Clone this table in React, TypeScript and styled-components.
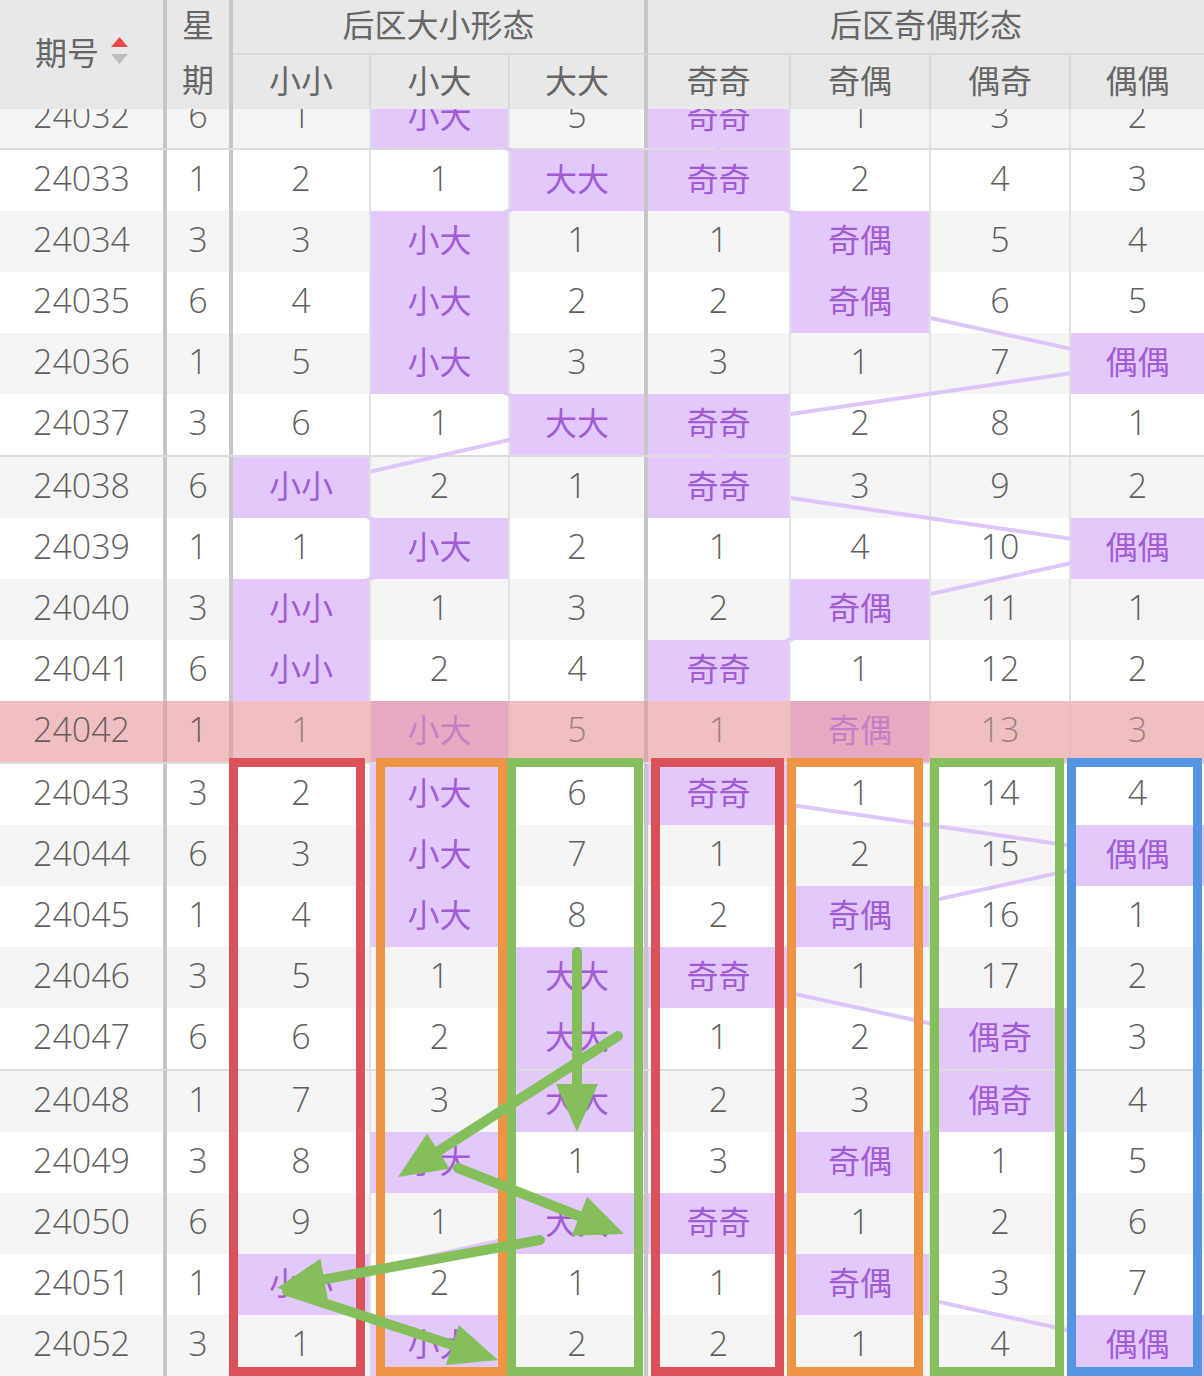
import React from 'react';
import styled, { createGlobalStyle } from 'styled-components';

const GlobalStyle = createGlobalStyle`
  html, body { margin: 0; padding: 0; background: #fff; }
  body { font-family: "Open Sans", "Noto Sans CJK SC", sans-serif; }
`;

type Col = { w: number; b: number };
const COLS: Col[] = [
  { w: 167, b: 4 },
  { w: 66, b: 4 },
  { w: 138, b: 2 },
  { w: 139, b: 2 },
  { w: 138, b: 4 },
  { w: 143, b: 2 },
  { w: 140, b: 2 },
  { w: 140, b: 2 },
  { w: 133, b: 0 },
];
const GRID = COLS.map((c) => `${c.w}px`).join(' ');
const COL_START: number[] = [];
COLS.reduce((acc, c) => {
  COL_START.push(acc);
  return acc + c.w;
}, 0);
const colCenter = (i: number) => COL_START[i] + (COLS[i].w - COLS[i].b) / 2;

const ROW_H = 61;
const rowTop = (i: number) => i * ROW_H + Math.ceil(i / 5) * 2;
const rowCenter = (i: number) => rowTop(i) + ROW_H / 2;

type Cell = string | number;
const DATA: Cell[][] = [
  ['24032', 6, 1, '小大', 5, '奇奇', 1, 3, 2],
  ['24033', 1, 2, 1, '大大', '奇奇', 2, 4, 3],
  ['24034', 3, 3, '小大', 1, 1, '奇偶', 5, 4],
  ['24035', 6, 4, '小大', 2, 2, '奇偶', 6, 5],
  ['24036', 1, 5, '小大', 3, 3, 1, 7, '偶偶'],
  ['24037', 3, 6, 1, '大大', '奇奇', 2, 8, 1],
  ['24038', 6, '小小', 2, 1, '奇奇', 3, 9, 2],
  ['24039', 1, 1, '小大', 2, 1, 4, 10, '偶偶'],
  ['24040', 3, '小小', 1, 3, 2, '奇偶', 11, 1],
  ['24041', 6, '小小', 2, 4, '奇奇', 1, 12, 2],
  ['24042', 1, 1, '小大', 5, 1, '奇偶', 13, 3],
  ['24043', 3, 2, '小大', 6, '奇奇', 1, 14, 4],
  ['24044', 6, 3, '小大', 7, 1, 2, 15, '偶偶'],
  ['24045', 1, 4, '小大', 8, 2, '奇偶', 16, 1],
  ['24046', 3, 5, 1, '大大', '奇奇', 1, 17, 2],
  ['24047', 6, 6, 2, '大大', 1, 2, '偶奇', 3],
  ['24048', 1, 7, 3, '大大', 2, 3, '偶奇', 4],
  ['24049', 3, 8, '小大', 1, 3, '奇偶', 1, 5],
  ['24050', 6, 9, 1, '大大', '奇奇', 1, 2, 6],
  ['24051', 1, '小小', 2, 1, 1, '奇偶', 3, 7],
  ['24052', 3, 1, '小大', 2, 2, 1, 4, '偶偶'],
];
const CURRENT = 10;

const isHl = (ci: number, v: Cell) => ci >= 2 && typeof v === 'string';

const trendLines: { x1: number; y1: number; x2: number; y2: number }[] = [];
[
  [2, 3, 4],
  [5, 6, 7, 8],
].forEach((group) => {
  const pos = DATA.map((r) => group.find((ci) => typeof r[ci] === 'string') as number);
  for (let i = 0; i < pos.length - 1; i++) {
    if (i === CURRENT - 1 || i === CURRENT) continue;
    trendLines.push({
      x1: colCenter(pos[i]),
      y1: rowCenter(i),
      x2: colCenter(pos[i + 1]),
      y2: rowCenter(i + 1),
    });
  }
});
const CONTENT_H = rowTop(DATA.length) + 2;

const Page = styled.div`
  position: relative;
  width: 1204px;
  height: 1376px;
  overflow: hidden;
  background: #fff;
  color: #666;
  font-size: 33px;
`;

const Header = styled.div`
  display: grid;
  grid-template-columns: ${GRID};
  grid-template-rows: 55px 54px;
  background: #e8e8e8;
  position: relative;
  z-index: 5;
  font-family: "Noto Sans CJK SC", sans-serif;
  font-size: 32px;
`;

const HeadCell = styled.div<{ $b: number; $span?: number; $rows?: number; $bottom?: boolean }>`
  box-sizing: border-box;
  display: flex;
  align-items: center;
  justify-content: center;
  line-height: 1;
  padding-bottom: ${(p) => (p.$bottom ? 7 : 6)}px;
  color: #666;
  grid-column: span ${(p) => p.$span || 1};
  grid-row: span ${(p) => p.$rows || 1};
  border-right: ${(p) => (p.$b === 4 ? '4px solid #c6c6c6' : p.$b === 2 ? '2px solid #d8d8d8' : 'none')};
  border-bottom: ${(p) => (p.$bottom ? '2px solid #d8d8d8' : 'none')};
  white-space: nowrap;
`;

const IssueHead = styled(HeadCell)`
  gap: 12px;
  padding-bottom: 8px;
`;

const WeekHead = styled(HeadCell)`
  flex-direction: column;
  justify-content: flex-start;
  padding-bottom: 0;
`;

const WeekChar = styled.span<{ $h: number }>`
  height: ${(p) => p.$h}px;
  display: flex;
  align-items: center;
  padding-bottom: 6px;
  box-sizing: border-box;
`;

const Body = styled.div`
  height: 1267px;
  overflow: hidden;
  position: relative;
`;

const BodyInner = styled.div`
  position: relative;
  margin-top: -22px;
`;

const Row = styled.div<{ $alt: boolean; $divider: boolean; $current: boolean }>`
  display: grid;
  grid-template-columns: ${GRID};
  height: ${ROW_H}px;
  background: ${(p) => (p.$current ? '#f0bfc1' : p.$alt ? '#f5f5f5' : '#ffffff')};
  border-bottom: ${(p) => (p.$divider ? '2px solid #dcdcdc' : 'none')};
`;

const DataCell = styled.div<{ $b: number; $hl: boolean; $cur: boolean; $data: boolean }>`
  box-sizing: border-box;
  display: flex;
  align-items: center;
  justify-content: center;
  line-height: 1;
  padding-bottom: ${(p) => (p.$hl ? 8 : 6)}px;
  font-family: ${(p) => (p.$hl ? '"Noto Sans CJK SC", sans-serif' : '"Open Sans", "Noto Sans CJK SC", sans-serif')};
  font-size: ${(p) => (p.$hl ? 32 : 34)}px;
  font-weight: ${(p) => (p.$hl ? 400 : 300)};
  border-right: ${(p) =>
    p.$b === 4
      ? `4px solid ${p.$cur ? '#d8aaac' : '#c6c6c6'}`
      : p.$b === 2
        ? `2px solid ${p.$cur ? '#ebbcbe' : '#e2e2e2'}`
        : 'none'};
  background: ${(p) => (p.$hl ? (p.$cur ? '#e7a8c2' : '#e3c8fc') : 'transparent')};
  background-clip: padding-box;
  color: ${(p) =>
    p.$hl ? (p.$cur ? '#c37fc4' : '#a15cd4') : p.$cur ? (p.$data ? '#9e8080' : '#6b5d5d') : '#5f5f5f'};
  position: ${(p) => (p.$hl ? 'relative' : 'static')};
  z-index: ${(p) => (p.$hl ? 2 : 'auto')};
  white-space: nowrap;
`;

const TrendSvg = styled.svg`
  position: absolute;
  left: 0;
  top: 0;
  z-index: 1;
  pointer-events: none;
`;

const Box = styled.div<{ $color: string }>`
  position: absolute;
  top: 758px;
  height: 618px;
  box-sizing: border-box;
  border: 9px solid ${(p) => p.$color};
  z-index: 10;
  pointer-events: none;
`;

const ArrowSvg = styled.svg`
  position: absolute;
  left: 0;
  top: 0;
  z-index: 11;
  pointer-events: none;
`;

const BOXES = [
  { left: 229, width: 136, color: '#d9525a' },
  { left: 376, width: 131, color: '#ee9445' },
  { left: 507, width: 136, color: '#86c05e' },
  { left: 651, width: 133, color: '#d9525a' },
  { left: 787, width: 136, color: '#ee9445' },
  { left: 930, width: 134, color: '#86c05e' },
  { left: 1067, width: 135, color: '#5495e3' },
];

const ARROWS: [number, number, number, number][] = [
  [577, 952, 577, 1132],
  [618, 1036, 398, 1177],
  [458, 1168, 624, 1234],
  [540, 1240, 277, 1288],
  [287, 1291, 498, 1360],
];

function arrowGeom(x1: number, y1: number, x2: number, y2: number, len = 48, half = 21) {
  const dx = x2 - x1;
  const dy = y2 - y1;
  const L = Math.hypot(dx, dy);
  const ux = dx / L;
  const uy = dy / L;
  const bx = x2 - ux * len;
  const by = y2 - uy * len;
  const px = -uy;
  const py = ux;
  return {
    line: { x1, y1, x2: bx + ux * 4, y2: by + uy * 4 },
    head: `${x2},${y2} ${bx + px * half},${by + py * half} ${bx - px * half},${by - py * half}`,
  };
}

const SortIcon = () => (
  <svg width="17" height="28" viewBox="0 0 17 28">
    <polygon points="8.5,0 17,10 0,10" fill="#e94a4a" />
    <polygon points="0,17 17,17 8.5,27" fill="#bdbdbd" />
  </svg>
);

const SIZE_HEAD = ['小小', '小大', '大大'];
const PARITY_HEAD = ['奇奇', '奇偶', '偶奇', '偶偶'];

export default function App() {
  return (
    <Page>
      <GlobalStyle />
      <Header>
        <IssueHead $b={4} $rows={2}>
          <span>期号</span>
          <SortIcon />
        </IssueHead>
        <WeekHead $b={4} $rows={2}>
          <WeekChar $h={53}>星</WeekChar>
          <WeekChar $h={58}>期</WeekChar>
        </WeekHead>
        <HeadCell $b={4} $span={3} $bottom>
          后区大小形态
        </HeadCell>
        <HeadCell $b={0} $span={4} $bottom>
          后区奇偶形态
        </HeadCell>
        {SIZE_HEAD.map((t, i) => (
          <HeadCell key={t} $b={COLS[2 + i].b}>
            {t}
          </HeadCell>
        ))}
        {PARITY_HEAD.map((t, i) => (
          <HeadCell key={t} $b={COLS[5 + i].b}>
            {t}
          </HeadCell>
        ))}
      </Header>
      <Body>
        <BodyInner>
          <TrendSvg width={1204} height={CONTENT_H}>
            {trendLines.map((l, i) => (
              <line key={i} {...l} stroke="#dfc6fa" strokeWidth={4} />
            ))}
          </TrendSvg>
          {DATA.map((r, ri) => (
            <Row key={r[0] as string} $alt={ri % 2 === 0} $divider={ri % 5 === 0} $current={ri === CURRENT}>
              {r.map((v, ci) => (
                <DataCell
                  key={ci}
                  $b={COLS[ci].b}
                  $hl={isHl(ci, v)}
                  $cur={ri === CURRENT}
                  $data={ci >= 2}
                >
                  {v}
                </DataCell>
              ))}
            </Row>
          ))}
        </BodyInner>
      </Body>
      {BOXES.map((b, i) => (
        <Box key={i} $color={b.color} style={{ left: b.left, width: b.width }} />
      ))}
      <ArrowSvg width={1204} height={1376}>
        {ARROWS.map((a, i) => {
          const g = arrowGeom(a[0], a[1], a[2], a[3]);
          return (
            <g key={i}>
              <line {...g.line} stroke="#84bf5b" strokeWidth={10} strokeLinecap="round" />
              <polygon points={g.head} fill="#84bf5b" />
            </g>
          );
        })}
      </ArrowSvg>
    </Page>
  );
}
